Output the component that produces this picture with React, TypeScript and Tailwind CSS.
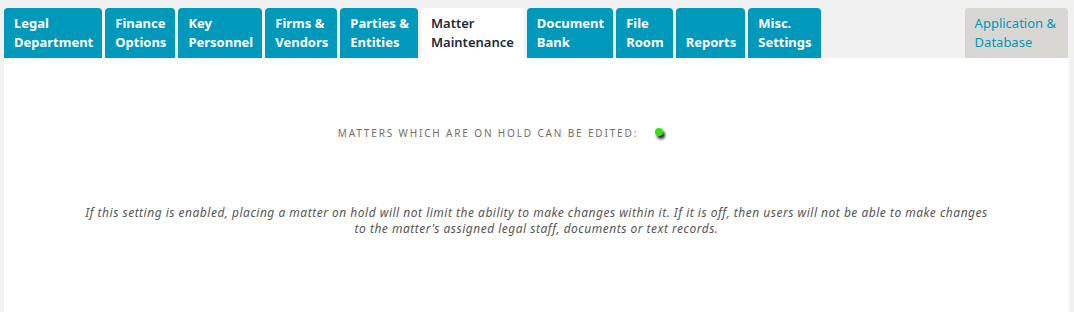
const tabs = [
  ['Legal', 'Department'],
  ['Finance', 'Options'],
  ['Key', 'Personnel'],
  ['Firms &', 'Vendors'],
  ['Parties &', 'Entities'],
  ['Matter', 'Maintenance'],
  ['Document', 'Bank'],
  ['File', 'Room'],
  ['', 'Reports'],
  ['Misc.', 'Settings'],
]

export default function App() {
  return (
    <div className="flex h-[312px] flex-col bg-[#f1f1f1] pl-[4px] pr-[5px] font-['Noto_Sans',sans-serif]">
      <div className="flex items-end gap-[3px] pt-[8px]">
        {tabs.map(([a, b]) => {
          const active = b === 'Maintenance'
          return (
            <div
              key={b}
              className={
                active
                  ? 'flex h-[50px] flex-col justify-center rounded-t-[4px] bg-white pl-[10px] pr-[10px] text-[13px] leading-[19px] font-semibold text-[#1d2b3a]'
                  : 'flex h-[50px] flex-col justify-center rounded-t-[4px] bg-[#0099bb] pl-[10px] pr-[9px] text-[13px] leading-[19px] font-bold text-white'
              }
            >
              <span className="h-[19px]">{a}</span>
              <span>{b}</span>
            </div>
          )
        })}
        <div className="ml-auto mr-[1px] flex h-[50px] flex-col justify-center rounded-t-[4px] bg-[#d8d7d3] pl-[10px] pr-[12px] text-[13px] leading-[19px] text-[#0099bb]">
          <span>Application &amp;</span>
          <span>Database</span>
        </div>
      </div>
      <div className="flex flex-1 flex-col items-center bg-white">
        <div className="mt-[68px] mr-[72px] flex items-center gap-[17px]">
          <span className="text-[10px] tracking-[1.85px] text-[#756c66] uppercase">
            Matters which are on hold can be edited:
          </span>
          <span className="mb-[4px] h-[8px] w-[8px] rounded-full bg-[#35e00f] shadow-[2px_3px_3px_#2a2a2a]" />
        </div>
        <p className="mt-[64px] w-[906px] text-center text-[12px] leading-[16px] tracking-[0.5px] text-[#555] italic">
          If this setting is enabled, placing a matter on hold will not limit the ability to make changes within it. If it is off, then users will not be able to make changes to the matter&apos;s assigned legal staff, documents or text records.
        </p>
      </div>
    </div>
  )
}
